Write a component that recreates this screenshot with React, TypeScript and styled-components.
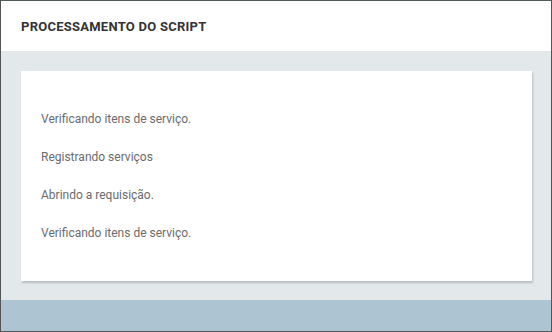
import React from "react";
import styled, { createGlobalStyle } from "styled-components";

const steps = [
  "Verificando itens de serviço.",
  "Registrando serviços",
  "Abrindo a requisição.",
  "Verificando itens de serviço.",
];

const GlobalStyle = createGlobalStyle`
  html, body {
    margin: 0;
    padding: 0;
    background: #ffffff;
  }
  * {
    box-sizing: border-box;
  }
`;

const App = () => {
  return (
    <>
      <GlobalStyle />
      <Window>
        <Header>
          <Title>PROCESSAMENTO DO SCRIPT</Title>
        </Header>
        <Body>
          <Card>
            {steps.map((step, i) => (
              <Step key={i}>{step}</Step>
            ))}
          </Card>
        </Body>
        <Footer />
      </Window>
    </>
  );
};

export default App;

const Window = styled.div`
  width: 552px;
  height: 332px;
  display: flex;
  flex-direction: column;
  border: 1px solid #555555;
  border-top-color: #4f5a5a;
  font-family: Roboto, "Liberation Sans", sans-serif;
`;

const Header = styled.div`
  height: 50px;
  flex-shrink: 0;
  display: flex;
  align-items: center;
  padding: 1px 20px 0;
  background: #ffffff;
`;

const Title = styled.h1`
  margin: 0;
  font-size: 13px;
  font-weight: 700;
  letter-spacing: 0.25px;
  color: #333333;
`;

const Body = styled.div`
  height: 249px;
  flex-shrink: 0;
  padding: 20px 19px 0 20px;
  background: #e3e8eb;
`;

const Card = styled.div`
  height: 210px;
  display: flex;
  flex-direction: column;
  gap: 24px;
  padding: 41px 20px;
  background: #ffffff;
  box-shadow: 1px 2px 2px rgba(0, 0, 0, 0.18);
`;

const Step = styled.div`
  font-size: 12px;
  line-height: 14px;
  color: #6b6b6b;
`;

const Footer = styled.div`
  flex: 1;
  background: #adc5d2;
`;
